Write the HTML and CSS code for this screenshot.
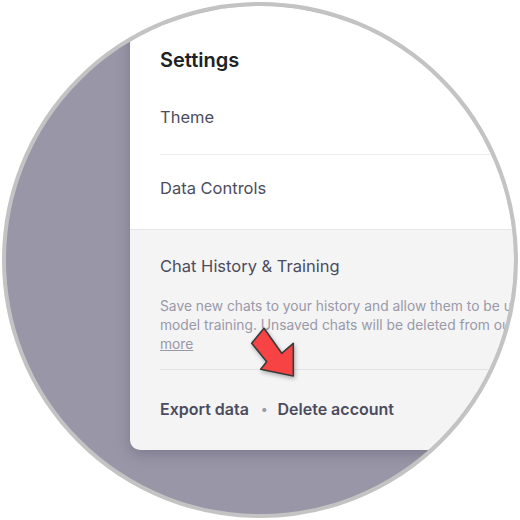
FILE: index.html
```html
<!DOCTYPE html>
<html lang="en">
<head>
    <meta charset="UTF-8">
    <meta name="viewport" content="width=device-width, initial-scale=1.0">
    <title>Settings</title>
    <link rel="stylesheet" href="styles.css">
</head>
<body>
    <div class="lens">
        <div class="card">
            <div class="card-top">
                <h2 class="title">Settings</h2>
                <div class="row row-first">Theme</div>
                <div class="row row-second">Data Controls</div>
            </div>
            <div class="card-bottom">
                <div class="section-title">Chat History &amp; Training</div>
                <p class="desc">
                    Save new chats to your history and allow them to be used to improve ChatGPT via<br>
                    model training. Unsaved chats will be deleted from our systems within 30 days. <a href="#">Learn<br>more</a>
                </p>
                <div class="actions">
                    <a href="#">Export data</a>
                    <span class="dot">&bull;</span>
                    <a href="#">Delete account</a>
                </div>
            </div>
        </div>

        <svg class="arrow" width="70" height="70" viewBox="0 0 70 70">
            <polygon points="24,8.3 41.7,33.3 53.3,23.3 53.3,56 20.7,49.3 26.7,41.7 11.7,23.3"
                     fill="#f74343" stroke="#3a3a3a" stroke-width="1.6" stroke-linejoin="round"/>
        </svg>
    </div>
</body>
</html>
```

FILE: styles.css
```css
body {
    margin: 0;
    background: #fff;
    font-family: Inter, "Noto Sans", sans-serif;
}
.lens {
    position: relative;
    box-sizing: border-box;
    width: 516px;
    height: 516px;
    margin: 2px;
    border: 4px solid #c3c3c3;
    border-radius: 50%;
    overflow: hidden;
    background: #9896a7;
}
.card {
    width: 440px;
    margin-left: 124px;
    border-bottom-left-radius: 10px;
    overflow: hidden;
    box-shadow: 0 4px 14px rgba(40, 38, 60, 0.25);
}
.card-top {
    background: #fff;
    padding: 40px 0 0 30px;
}
.title {
    margin: 0;
    font-size: 20px;
    line-height: 28px;
    font-weight: 600;
    color: #202123;
}
.row {
    font-size: 16.5px;
    line-height: 24px;
    color: #4c4c5e;
}
.row-first {
    padding: 31px 0 25px;
    border-bottom: 1px solid #ececec;
}
.row-second {
    padding: 21px 0 29px;
}
.card-bottom {
    background: #f4f4f4;
    border-top: 1px solid #e6e6e6;
    padding: 24px 0 29px 30px;
}
.section-title {
    font-size: 16.5px;
    line-height: 24px;
    color: #4c4c5e;
}
.desc {
    margin: 19px 0 0;
    padding-bottom: 15px;
    border-bottom: 1px solid #e3e3e3;
    font-size: 13.8px;
    line-height: 19px;
    color: #9a99a8;
    white-space: nowrap;
}
.desc a {
    color: #9a99a8;
}
.actions {
    display: flex;
    align-items: center;
    gap: 9px;
    padding-top: 27px;
    font-size: 16px;
    line-height: 24px;
    font-weight: 600;
}
.actions a {
    color: #4c4c5e;
    text-decoration: none;
}
.dot {
    color: #9a99a8;
    font-size: 13px;
    margin: 0 1px 0 3px;
}
.arrow {
    position: absolute;
    left: 234px;
    top: 314px;
    filter: drop-shadow(1px 2px 2px rgba(0, 0, 0, 0.3));
}
```
